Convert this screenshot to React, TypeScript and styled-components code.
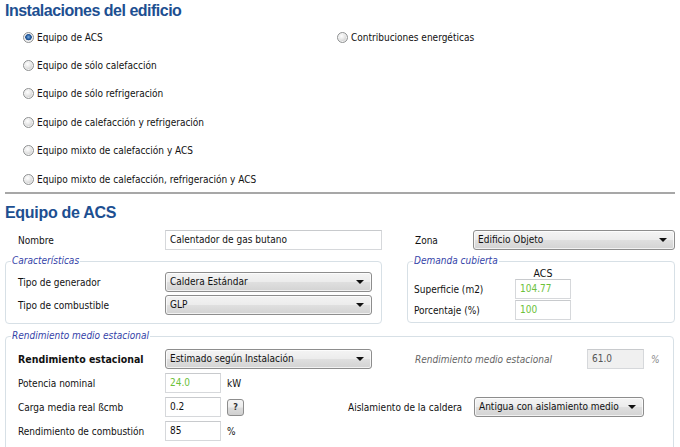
import React from "react";
import styled, { createGlobalStyle } from "styled-components";

const GlobalStyle = createGlobalStyle`
  html, body {
    margin: 0;
    padding: 0;
    background: #ffffff;
  }
  body {
    font-family: "DejaVu Sans Condensed", "DejaVu Sans", "Liberation Sans", sans-serif;
    font-stretch: condensed;
    font-size: 10px;
    color: #111;
  }
`;

const Page = styled.div`
  width: 680px;
  height: 447px;
  overflow: hidden;
  padding: 0 5px;
  box-sizing: border-box;
`;

const Title = styled.h1`
  margin: 0;
  height: 22px;
  line-height: 22px;
  font-family: "Liberation Sans", Arial, sans-serif;
  font-stretch: normal;
  font-size: 16px;
  font-weight: bold;
  letter-spacing: -0.5px;
  color: #1d4f91;
`;

const SectionTitle = styled(Title)`
  margin-top: 9px;
  height: 20px;
  line-height: 20px;
  letter-spacing: -0.3px;
`;

const RadioArea = styled.div`
  display: grid;
  grid-template-columns: 314px 1fr;
  grid-auto-flow: column;
  grid-template-rows: repeat(6, 28.4px);
  padding: 1px 0 0 18px;
`;

const RadioRow = styled.label`
  display: flex;
  align-items: center;
  gap: 3px;
  white-space: nowrap;
`;

const RadioDot = styled.span<{ $checked?: boolean }>`
  width: 11px;
  height: 11px;
  border-radius: 50%;
  box-sizing: border-box;
  border: 1px solid #8f9192;
  background: ${(p) =>
    p.$checked
      ? "radial-gradient(circle at 50% 45%, #7fb0e0 0, #2a63a8 2px, #1d4a86 3px, #e8e8e8 3.6px, #f6f6f6 5px)"
      : "radial-gradient(circle at 40% 35%, #ffffff 0, #e9e9e9 3px, #d4d4d4 5px)"};
  box-shadow: inset 0 0 0 1px #f4f4f4;
`;

const Separator = styled.div`
  height: 2px;
  margin-top: -1px;
  background: #a7a7a7;
`;

const TopRow = styled.div`
  display: grid;
  grid-template-columns: 147px 217px 33px 58px 1fr;
  align-items: center;
  height: 20px;
  margin-top: 7px;
  padding-left: 13px;
`;

const Label = styled.span<{ $w?: number; $bold?: boolean }>`
  ${(p) => (p.$w ? `width: ${p.$w}px; flex: none;` : "")}
  font-weight: ${(p) => (p.$bold ? "bold" : "normal")};
  font-size: ${(p) => (p.$bold ? "10.5px" : "10px")};
  white-space: nowrap;
`;

const NoteLabel = styled.span<{ $w: number; $ml?: number }>`
  width: ${(p) => p.$w}px;
  margin-left: ${(p) => p.$ml ?? 0}px;
  flex: none;
  font-style: italic;
  color: #666;
  white-space: nowrap;
`;

const Unit = styled.span<{ $muted?: boolean }>`
  margin-left: ${(p) => (p.$muted ? 7 : 6)}px;
  color: ${(p) => (p.$muted ? "#888" : "#111")};
  font-style: ${(p) => (p.$muted ? "italic" : "normal")};
`;

const TextBox = styled.div<{ $w?: number; $tone?: "green" | "ro" }>`
  ${(p) => (p.$w ? `width: ${p.$w}px;` : "")}
  flex: none;
  height: 20px;
  box-sizing: border-box;
  border: 1px solid #d6d8db;
  border-top-color: #c8cacd;
  background: ${(p) => (p.$tone === "ro" ? "#f0f0f0" : "#fff")};
  color: ${(p) =>
    p.$tone === "green" ? "#6cc13a" : p.$tone === "ro" ? "#555" : "#111"};
  padding: 0 4px;
  line-height: 18px;
  font-size: 10px;
  white-space: nowrap;
  overflow: hidden;
`;

const SelectBox = styled.div<{ $w?: number }>`
  ${(p) => (p.$w ? `width: ${p.$w}px;` : "")}
  flex: none;
  position: relative;
  height: 20px;
  box-sizing: border-box;
  border: 1px solid #8d8d8d;
  border-radius: 3px;
  background: linear-gradient(#f4f4f4 0%, #ececec 48%, #dfdfdf 52%, #d3d3d3 100%);
  box-shadow: inset 0 0 0 1px rgba(255, 255, 255, 0.7);
  padding: 0 18px 0 4px;
  line-height: 18px;
  font-size: 10px;
  white-space: nowrap;
  overflow: hidden;

  &::after {
    content: "";
    position: absolute;
    right: 7px;
    top: 7px;
    border-left: 4px solid transparent;
    border-right: 4px solid transparent;
    border-top: 4px solid #111;
  }
`;

const HelpButton = styled.div`
  width: 17px;
  height: 17px;
  margin-left: 6px;
  flex: none;
  box-sizing: border-box;
  border: 1px solid #8d8d8d;
  border-radius: 3px;
  background: linear-gradient(#f4f4f4 0%, #ececec 48%, #dcdcdc 52%, #d0d0d0 100%);
  display: flex;
  align-items: center;
  justify-content: center;
  font-size: 9px;
  font-weight: bold;
  color: #333;
`;

const GroupRow = styled.div`
  display: flex;
  align-items: flex-start;
  gap: 25px;
  margin-top: 5px;
`;

const Group = styled.fieldset<{ $w?: number }>`
  ${(p) => (p.$w ? `width: ${p.$w}px;` : "")}
  margin: 0;
  padding: 0;
  min-width: 0;
  box-sizing: border-box;
  border: 1px solid #d7e0e6;
  border-radius: 4px;
`;

const BigGroup = styled(Group)`
  margin-top: 6px;
  width: 669px;
  height: 130px;
`;

const Legend = styled.legend`
  margin-left: 5px;
  padding: 0 1px;
  line-height: 12px;
  font-style: italic;
  color: #3443a8;
  font-size: 10px;
`;

const Rows = styled.div<{ $pt: number; $gap: number; $pb?: number }>`
  display: flex;
  flex-direction: column;
  gap: ${(p) => p.$gap}px;
  padding: ${(p) => p.$pt}px 0 ${(p) => p.$pb ?? 0}px 12px;
`;

const Row = styled.div`
  display: flex;
  align-items: center;
  height: 20px;
`;

const DemandGrid = styled.div`
  display: grid;
  grid-template-columns: 101px 56px;
  grid-template-rows: 11px 20px 20px;
  row-gap: 1px;
  align-items: center;
  padding: 0 0 2px 6px;
`;

const ColHead = styled.span`
  grid-column: 2;
  text-align: center;
  line-height: 11px;
  font-size: 10.5px;
  margin-bottom: -2px;
`;

const leftRadios = [
  "Equipo de ACS",
  "Equipo de sólo calefacción",
  "Equipo de sólo refrigeración",
  "Equipo de calefacción y refrigeración",
  "Equipo mixto de calefacción y ACS",
  "Equipo mixto de calefacción, refrigeración y ACS",
];

const App: React.FC = () => {
  return (
    <Page>
      <GlobalStyle />
      <Title>Instalaciones del edificio</Title>
      <RadioArea>
        {leftRadios.map((r, i) => (
          <RadioRow key={r}>
            <RadioDot $checked={i === 0} />
            {r}
          </RadioRow>
        ))}
        <RadioRow>
          <RadioDot />
          Contribuciones energéticas
        </RadioRow>
      </RadioArea>
      <Separator />

      <SectionTitle>Equipo de ACS</SectionTitle>
      <TopRow>
        <Label>Nombre</Label>
        <TextBox>Calentador de gas butano</TextBox>
        <span />
        <Label>Zona</Label>
        <SelectBox>Edificio Objeto</SelectBox>
      </TopRow>

      <GroupRow>
        <Group $w={377}>
          <Legend>Características</Legend>
          <Rows $pt={5} $gap={3} $pb={8}>
            <Row>
              <Label $w={147}>Tipo de generador</Label>
              <SelectBox $w={207}>Caldera Estándar</SelectBox>
            </Row>
            <Row>
              <Label $w={147}>Tipo de combustible</Label>
              <SelectBox $w={207}>GLP</SelectBox>
            </Row>
          </Rows>
        </Group>
        <Group $w={268}>
          <Legend>Demanda cubierta</Legend>
          <DemandGrid>
            <ColHead>ACS</ColHead>
            <Label>Superficie (m2)</Label>
            <TextBox $tone="green">104.77</TextBox>
            <Label>Porcentaje (%)</Label>
            <TextBox $tone="green">100</TextBox>
          </DemandGrid>
        </Group>
      </GroupRow>

      <BigGroup>
        <Legend>Rendimiento medio estacional</Legend>
        <Rows $pt={7} $gap={4}>
          <Row>
            <Label $w={147} $bold>
              Rendimiento estacional
            </Label>
            <SelectBox $w={207}>Estimado según Instalación</SelectBox>
            <NoteLabel $w={172} $ml={43}>
              Rendimiento medio estacional
            </NoteLabel>
            <TextBox $w={57} $tone="ro">
              61.0
            </TextBox>
            <Unit $muted>%</Unit>
          </Row>
          <Row>
            <Label $w={147}>Potencia nominal</Label>
            <TextBox $w={56} $tone="green">
              24.0
            </TextBox>
            <Unit>kW</Unit>
          </Row>
          <Row>
            <Label $w={147}>Carga media real ßcmb</Label>
            <TextBox $w={56}>0.2</TextBox>
            <HelpButton>?</HelpButton>
            <Label $w={126} style={{ marginLeft: 104 }}>
              Aislamiento de la caldera
            </Label>
            <SelectBox $w={170}>Antigua con aislamiento medio</SelectBox>
          </Row>
          <Row>
            <Label $w={147}>Rendimiento de combustión</Label>
            <TextBox $w={56}>85</TextBox>
            <Unit>%</Unit>
          </Row>
        </Rows>
      </BigGroup>
    </Page>
  );
};

export default App;
